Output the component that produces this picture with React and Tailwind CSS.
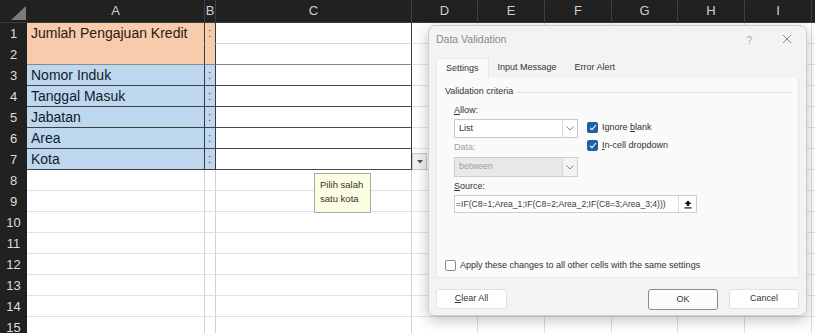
import React from 'react';

const colW = [
  'w-[178px]',
  'w-[11px]',
  'w-[196px]',
  'w-[66px]',
  'w-[67px]',
  'w-[67px]',
  'w-[66px]',
  'w-[67px]',
  'w-[67px]',
  'w-[30px]',
];
const letters = ['A', 'B', 'C', 'D', 'E', 'F', 'G', 'H', 'I', ''];

const labels = {
  1: 'Jumlah Pengajuan Kredit',
  3: 'Nomor Induk',
  4: 'Tanggal Masuk',
  5: 'Jabatan',
  6: 'Area',
  7: 'Kota',
};

function cellA(r) {
  if (r === 1) return 'bg-[#f8cbad] border-b border-b-[#f8cbad] border-r border-r-[#3a3a3a] text-[#2b1a0e]';
  if (r === 2) return 'bg-[#f8cbad] border-b border-b-[#8a8a8a] border-r border-r-[#3a3a3a]';
  if (r <= 7) return 'bg-[#bdd7ee] border-b border-b-[#3f3f3f] border-r border-r-[#3a3a3a] text-[#101c2a]';
  return 'bg-white border-b border-b-[#e1e1e1] border-r border-r-[#d2d2d2]';
}

function cellC(r) {
  if (r === 1) return 'bg-white border-b border-b-[#d6d6d6] border-r border-r-[#3a3a3a]';
  if (r === 2) return 'bg-white border-b border-b-[#8a8a8a] border-r border-r-[#3a3a3a]';
  if (r <= 7) return 'bg-white border-b border-b-[#4a4a4a] border-r border-r-[#3a3a3a]';
  return 'bg-white border-b border-b-[#e1e1e1] border-r border-r-[#d2d2d2]';
}

function SheetRow({ r }) {
  return (
    <div className="flex h-[21px]">
      <div className="w-[27px] shrink-0 bg-[#212121] flex items-center justify-center text-[13px] text-[#dedede]">
        {r}
      </div>
      <div className={`${colW[0]} shrink-0 flex items-center pl-[4px] text-[14px] ${cellA(r)}`}>
        {labels[r] || ''}
      </div>
      <div className={`${colW[1]} shrink-0 flex items-center pl-[3px] text-[12px] text-[#555] ${cellA(r)}`}>
        {r === 1 || (r >= 3 && r <= 7) ? ':' : ''}
      </div>
      <div className={`${colW[2]} shrink-0 ${cellC(r)}`} />
      {colW.slice(3).map((w, i) => (
        <div key={i} className={`${w} shrink-0 bg-white border-b border-b-[#e1e1e1] border-r border-r-[#dcdcdc]`} />
      ))}
    </div>
  );
}

function Chevron() {
  return (
    <svg width="8" height="5" viewBox="0 0 8 5">
      <polyline points="0.5,0.5 4,4 7.5,0.5" fill="none" stroke="#777" strokeWidth="0.9" />
    </svg>
  );
}

function Check({ on }) {
  if (!on) {
    return <div className="w-[11px] h-[11px] rounded-[2px] border border-[#8a8a8a] bg-white shrink-0" />;
  }
  return (
    <div className="w-[11px] h-[11px] rounded-[2px] bg-[#1f5fa8] shrink-0 flex items-center justify-center">
      <svg width="8" height="7" viewBox="0 0 8 7">
        <polyline points="1,3.8 3,5.6 7,1" fill="none" stroke="#fff" strokeWidth="1.1" />
      </svg>
    </div>
  );
}

function Dialog() {
  return (
    <div className="absolute left-[428px] top-[25px] w-[379px] h-[291px] rounded-[7px] border border-[#cfcfcf] bg-[#f3f3f3] shadow-[0_4px_14px_rgba(0,0,0,0.25)] text-[9px] text-[#333]">
      <div className="h-[32px] flex items-start pt-[6px] pl-[7px] pr-[14px]">
        <span className="text-[10.5px] text-[#8a8a8a]">Data Validation</span>
        <span className="ml-auto mr-[30px] mt-[1px] text-[10px] text-[#aaa]">?</span>
        <svg className="mt-[2px]" width="10" height="10" viewBox="0 0 10 10">
          <path d="M1 1 L9 9 M9 1 L1 9" stroke="#7a7a7a" strokeWidth="0.9" />
        </svg>
      </div>

      <div className="flex h-[20px] ml-[7px]">
        <div className="px-[9px] flex items-center bg-[#fafafa] border-t border-l border-r border-[#e6e6e6] rounded-t-[2px]">
          Settings
        </div>
        <div className="px-[9px] flex items-center">Input Message</div>
        <div className="px-[9px] flex items-center">Error Alert</div>
      </div>

      <div className="mx-[7px] h-[200px] bg-[#fafafa] border border-[#e6e6e6] border-t-0 pl-[8px] pt-[8px]">
        <div className="h-[12px] flex items-center gap-[3px] pr-[6px]">
          <span>Validation criteria</span>
          <div className="flex-1 h-px bg-[#e2e2e2]" />
        </div>

        <div className="pl-[9px]">
          <div className="flex mt-[7px]">
            <div className="w-[124px]">
              <div className="h-[12px] flex items-center">
                <span><span className="underline">A</span>llow:</span>
              </div>
              <div className="mt-[2px] h-[19px] flex border border-[#c9c9c9] bg-white">
                <div className="flex-1 flex items-center pl-[4px]">List</div>
                <div className="w-[15px] border-l border-[#dcdcdc] flex items-center justify-center">
                  <Chevron />
                </div>
              </div>
              <div className="mt-[4px] h-[12px] flex items-center text-[#a0a0a0]">Data:</div>
              <div className="mt-[3px] h-[20px] flex border border-[#cfcfcf] bg-[#e9e9e9]">
                <div className="flex-1 flex items-center pl-[4px] text-[#a0a0a0]">between</div>
                <div className="w-[15px] border-l border-[#d8d8d8] bg-[#f4f4f4] flex items-center justify-center">
                  <Chevron />
                </div>
              </div>
            </div>
            <div className="ml-[9px] pt-[17px] flex flex-col gap-[7px]">
              <div className="flex items-center gap-[4px] h-[11px]">
                <Check on />
                <span>Ignore <span className="underline">b</span>lank</span>
              </div>
              <div className="flex items-center gap-[4px] h-[11px]">
                <Check on />
                <span><span className="underline">I</span>n-cell dropdown</span>
              </div>
            </div>
          </div>

          <div className="mt-[4px] h-[12px] flex items-center">
            <span><span className="underline">S</span>ource:</span>
          </div>
          <div className="mt-[2px] w-[243px] h-[18px] flex border border-[#cfcfcf] bg-white">
            <div className="flex-1 flex items-center pl-[1px] text-[8.6px] text-[#3a3a3a] whitespace-nowrap overflow-hidden">
              =IF(C8=1;Area_1;IF(C8=2;Area_2;IF(C8=3;Area_3;4)))
            </div>
            <div className="w-[18px] border-l border-[#dcdcdc] flex items-center justify-center">
              <svg width="8" height="9" viewBox="0 0 8 9">
                <path d="M4 0.5 L7.5 4 L5.2 4 L5.2 6 L2.8 6 L2.8 4 L0.5 4 Z" fill="#111" />
                <rect x="0.5" y="7.3" width="7" height="1.2" fill="#111" />
              </svg>
            </div>
          </div>
        </div>

        <div className="mt-[47px] flex items-center gap-[4px] h-[11px]">
          <Check />
          <span>Apply these changes to all other cells with the same settings</span>
        </div>
      </div>

      <div className="mt-[11px] px-[7px] flex">
        <div className="w-[71px] h-[20px] bg-white border border-[#e2e2e2] rounded-[3px] flex items-center justify-center">
          <span><span className="underline">C</span>lear All</span>
        </div>
        <div className="ml-auto w-[70px] h-[21px] bg-[#fcfcfc] border border-[#8c8c8c] rounded-[3px] flex items-center justify-center">
          OK
        </div>
        <div className="ml-[11px] w-[70px] h-[20px] bg-white border border-[#e2e2e2] rounded-[3px] flex items-center justify-center">
          Cancel
        </div>
      </div>
    </div>
  );
}

export default function App() {
  const rows = Array.from({ length: 15 }, (_, i) => i + 1);
  return (
    <div className="relative w-[815px] h-[333px] overflow-hidden bg-white font-['Liberation_Sans',Arial,sans-serif]">
      <div className="flex h-[23px] bg-[#212121] border-b border-[#3a3a3a]">
        <div className="w-[27px] shrink-0 flex items-end justify-end pb-[2px] pr-[1px]">
          <svg width="15" height="14" viewBox="0 0 15 14">
            <polygon points="15,0 15,14 0,14" fill="#7a7a7a" />
          </svg>
        </div>
        {colW.map((w, i) => (
          <div
            key={i}
            className={`${w} shrink-0 flex items-center justify-center text-[13px] text-[#cfcfcf] border-r border-[#3f3f3f]`}
          >
            {letters[i]}
          </div>
        ))}
      </div>

      {rows.map((r) => (
        <SheetRow key={r} r={r} />
      ))}

      <div className="absolute left-[412px] top-[153px] w-[15px] h-[17px] bg-[#f0f0f0] border border-[#c8c8c8] flex items-center justify-center">
        <svg width="6" height="4" viewBox="0 0 6 4">
          <polygon points="0,0 6,0 3,3.5" fill="#555" />
        </svg>
      </div>

      <div className="absolute left-[314px] top-[173px] w-[57px] h-[40px] bg-[#fdfde3] border border-[#a8a8a8] pl-[5px] pt-[4px] text-[9.5px] leading-[14px] text-[#333]">
        <div>Pilih salah</div>
        <div>satu kota</div>
      </div>

      <Dialog />
    </div>
  );
}
